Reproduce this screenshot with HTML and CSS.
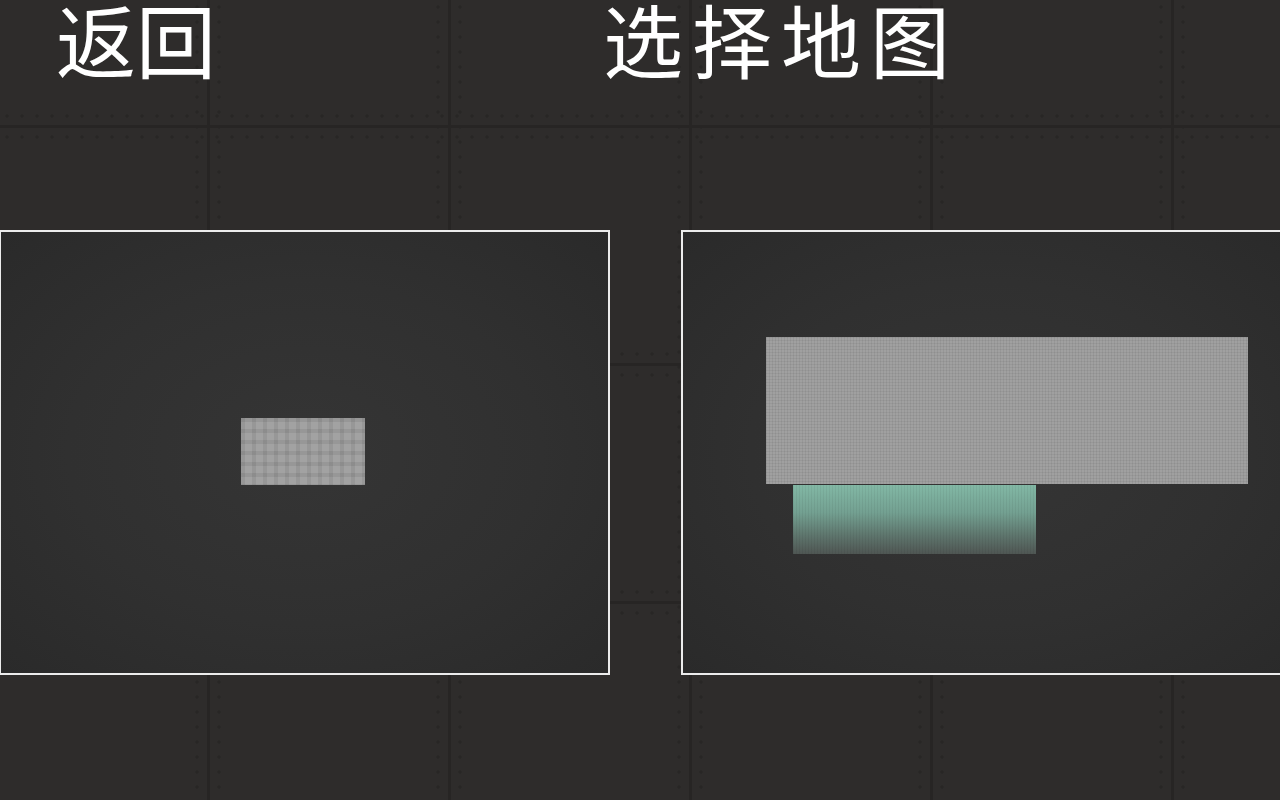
FILE: index.html
```html
<!DOCTYPE html>
<html lang="zh-CN">
<head>
    <meta charset="UTF-8">
    <meta name="viewport" content="width=device-width, initial-scale=1.0">
    <title>选择地图</title>
    <link rel="stylesheet" href="styles.css">
</head>
<body>

    <div class="top">
        <a class="back" href="#">返回</a>
        <h1 class="title">选择地图</h1>
    </div>

    <div class="maps">
        <div class="map-card">
            <div class="block small-room"></div>
        </div>
        <div class="map-card">
            <div class="block hall"></div>
            <div class="block pool"></div>
        </div>
    </div>

</body>
</html>
```

FILE: styles.css
```css
html, body {
    margin: 0;
    height: 100%;
}
body {
    width: 1280px;
    height: 800px;
    overflow: hidden;
    font-family: "Noto Sans CJK SC", sans-serif;
    color: #fff;
    background-color: #2e2c2b;
    /* металлические плиты: швы + заклёпки вдоль швов */
    background-image:
        linear-gradient(90deg, #272524 0 3px, transparent 3px),
        linear-gradient(180deg, #272524 0 3px, transparent 3px),
        radial-gradient(circle at 7px 12px, #282625 1.3px, transparent 2px),
        radial-gradient(circle at 7px 229px, #282625 1.3px, transparent 2px),
        radial-gradient(circle at 12px 7px, #282625 1.3px, transparent 2px),
        radial-gradient(circle at 231px 7px, #282625 1.3px, transparent 2px);
    background-size:
        241px 238px,
        241px 238px,
        15px 238px,
        15px 238px,
        241px 15px,
        241px 15px;
    background-position:
        207px 0,
        0 125px,
        0 125px,
        0 125px,
        207px 0,
        207px 0;
}

.top {
    height: 230px;
    display: flex;
    align-items: flex-start;
}
.back,
.title {
    font-size: 80px;
    font-weight: 400;
    line-height: 1;
    margin: -3px 0 0;
}
.back {
    color: #fff;
    text-decoration: none;
    margin-left: 56px;
}
.title {
    margin-left: 387px;
    letter-spacing: 9px;
}

.maps {
    display: flex;
    gap: 71px;
    margin-left: -1px;
}
.map-card {
    flex: none;
    position: relative;
    width: 607px;
    height: 441px;
    border: 2px solid #ececec;
    background: radial-gradient(ellipse at 50% 50%, #353535 0%, #303030 55%, #2a2a2a 100%);
}

/* блоки на превью карты */
.block {
    position: absolute;
}
.small-room {
    left: 240px;
    top: 186px;
    width: 124px;
    height: 67px;
    background-color: #a2a2a2;
    background-image:
        repeating-linear-gradient(90deg, rgba(0,0,0,0.07) 0 4px, transparent 4px 11px),
        repeating-linear-gradient(180deg, rgba(0,0,0,0.07) 0 4px, transparent 4px 11px);
}
.hall {
    left: 83px;
    top: 105px;
    width: 482px;
    height: 147px;
    background-color: #a0a0a0;
    background-image:
        repeating-linear-gradient(90deg, rgba(0,0,0,0.06) 0 1px, transparent 1px 3px),
        repeating-linear-gradient(180deg, rgba(0,0,0,0.05) 0 1px, transparent 1px 3px);
}
.pool {
    left: 110px;
    top: 253px;
    width: 243px;
    height: 69px;
    background-image:
        repeating-linear-gradient(90deg, rgba(0,0,0,0.05) 0 1px, transparent 1px 3px),
        linear-gradient(180deg, #82b8a5 0%, #73a091 40%, #5d736b 75%, #4f5653 100%);
}
```
